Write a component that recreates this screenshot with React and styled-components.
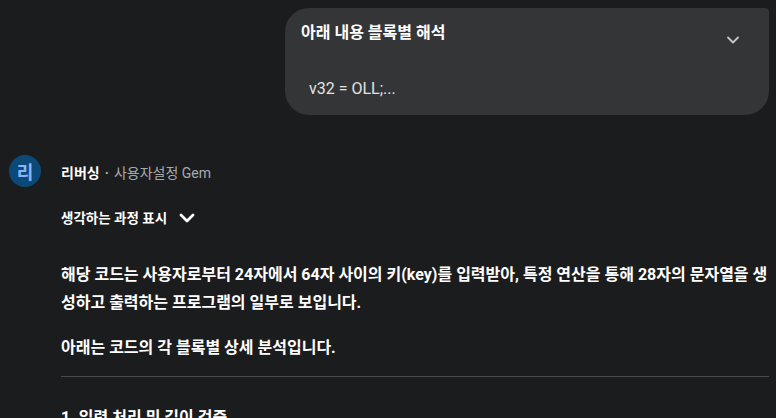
import styled, { createGlobalStyle } from "styled-components";

const Global = createGlobalStyle`
  html, body {
    margin: 0;
    padding: 0;
    background: #1b1c1d;
    color: #e3e3e3;
    font-family: Roboto, "Noto Sans CJK KR", sans-serif;
    overflow: hidden;
  }
`;

const Page = styled.div`
  width: 776px;
  height: 418px;
  overflow: hidden;
  display: flex;
  flex-direction: column;
  padding: 8px 7px 0 9px;
  box-sizing: border-box;
`;

const UserRow = styled.div`
  display: flex;
  justify-content: flex-end;
`;

const Bubble = styled.div`
  width: 484px;
  height: 107px;
  box-sizing: border-box;
  background: #333537;
  border-radius: 24px 4px 24px 24px;
  padding: 14px 26px 0 16px;
  display: flex;
  flex-direction: column;
`;

const BubbleHead = styled.div`
  display: flex;
  justify-content: space-between;
  align-items: flex-start;
`;

const BubbleTitle = styled.div`
  font-size: 16px;
  font-weight: 700;
  color: #ffffff;
  line-height: 22px;
`;

const ChevronBtn = styled.span`
  display: flex;
  margin-top: 8px;
  color: #c4c7c5;
`;

const Preview = styled.div`
  margin-top: 29px;
  padding-left: 8px;
  font-size: 16px;
  color: #e3e3e3;
  line-height: 20px;
`;

const Response = styled.div`
  display: flex;
  gap: 20px;
  margin-top: 40px;
`;

const Avatar = styled.div`
  width: 32px;
  height: 32px;
  flex: none;
  border-radius: 50%;
  background: #0b4a78;
  color: #8ab4f8;
  font-size: 18px;
  font-weight: 700;
  display: flex;
  align-items: center;
  justify-content: center;
`;

const Body = styled.div`
  flex: 1;
  display: flex;
  flex-direction: column;
`;

const Meta = styled.div`
  font-size: 14px;
  line-height: 32px;
  color: #a8abae;
  margin-top: 2px;
  b {
    color: #ffffff;
    font-weight: 700;
  }
`;

const Dot = styled.span`
  font-weight: 700;
  margin: 0 5px;
`;

const Thinking = styled.div`
  display: flex;
  align-items: center;
  gap: 8px;
  margin-top: 17px;
  font-size: 13.5px;
  font-weight: 700;
  color: #ffffff;
  line-height: 20px;
`;

const Para = styled.p`
  margin: ${(p) => p.$top}px 0 0;
  font-size: 16px;
  font-weight: 700;
  line-height: 28px;
  color: #ffffff;
`;

const Rule = styled.hr`
  margin: 14px 0 0;
  border: none;
  border-top: 1px solid #47494b;
`;

const Heading = styled.h3`
  margin: 29px 0 0;
  font-size: 16px;
  font-weight: 700;
  color: #ffffff;
  line-height: 24px;
`;

const Chevron = ({ size = 16, stroke = 2.4 }) => (
  <svg width={size} height={size} viewBox="0 0 24 24" fill="none">
    <path d="M6 9l6 6 6-6" stroke="currentColor" strokeWidth={stroke} strokeLinecap="round" strokeLinejoin="round" />
  </svg>
);

export default function App() {
  return (
    <>
      <Global />
      <Page>
        <UserRow>
          <Bubble>
            <BubbleHead>
              <BubbleTitle>아래 내용 블록별 해석</BubbleTitle>
              <ChevronBtn>
                <Chevron size={20} stroke={2.2} />
              </ChevronBtn>
            </BubbleHead>
            <Preview>v32 = OLL;...</Preview>
          </Bubble>
        </UserRow>
        <Response>
          <Avatar>리</Avatar>
          <Body>
            <Meta>
              <b>리버싱</b>
              <Dot>·</Dot>사용자설정 Gem
            </Meta>
            <Thinking>
              생각하는 과정 표시
              <Chevron size={24} stroke={2.8} />
            </Thinking>
            <Para $top={31}>
              해당 코드는 사용자로부터 24자에서 64자 사이의 키(key)를 입력받아, 특정 연산을 통해 28자의 문자열을 생성하고 출력하는 프로그램의 일부로 보입니다.
            </Para>
            <Para $top={17}>아래는 코드의 각 블록별 상세 분석입니다.</Para>
            <Rule />
            <Heading>1. 입력 처리 및 길이 검증</Heading>
          </Body>
        </Response>
      </Page>
    </>
  );
}
